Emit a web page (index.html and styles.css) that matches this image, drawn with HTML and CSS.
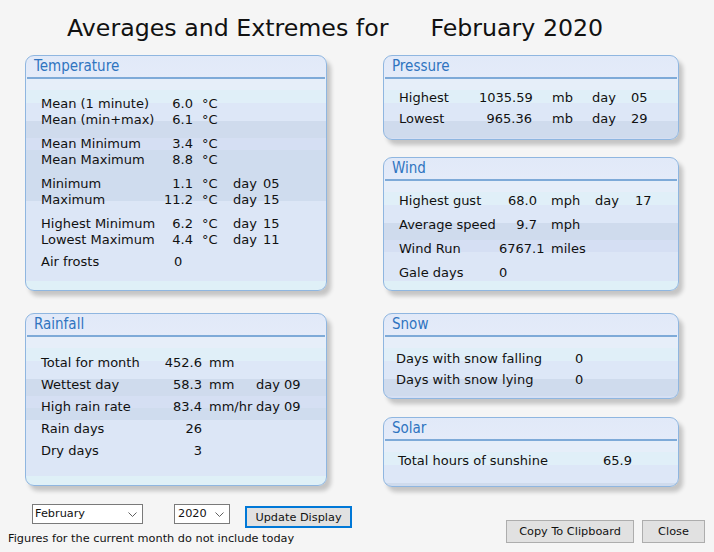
FILE: index.html
```html
<!DOCTYPE html>
<html>
<head>
<meta charset="utf-8">
<link rel="stylesheet" href="styles.css">
</head>
<body>
<div class="page">
  <h1 class="title"><span>Averages and Extremes for</span><span class="title-month">February 2020</span></h1>

  <div class="columns">
    <div class="col col-left">
      <section class="panel temp">
        <div class="panel-head">Temperature</div>
        <div class="panel-line"></div>
        <div class="panel-body">
          <div class="group">
            <div class="row"><span>Mean (1 minute)</span><span class="v">6.0</span><span class="u">°C</span></div>
            <div class="row"><span>Mean (min+max)</span><span class="v">6.1</span><span class="u">°C</span></div>
          </div>
          <div class="group">
            <div class="row"><span>Mean Minimum</span><span class="v">3.4</span><span class="u">°C</span></div>
            <div class="row"><span>Mean Maximum</span><span class="v">8.8</span><span class="u">°C</span></div>
          </div>
          <div class="group">
            <div class="row"><span>Minimum</span><span class="v">1.1</span><span class="u">°C</span><span>day</span><span>05</span></div>
            <div class="row"><span>Maximum</span><span class="v">11.2</span><span class="u">°C</span><span>day</span><span>15</span></div>
          </div>
          <div class="group">
            <div class="row"><span>Highest Minimum</span><span class="v">6.2</span><span class="u">°C</span><span>day</span><span>15</span></div>
            <div class="row"><span>Lowest Maximum</span><span class="v">4.4</span><span class="u">°C</span><span>day</span><span>11</span></div>
          </div>
          <div class="group group-last">
            <div class="row"><span>Air frosts</span><span class="v v-left">0</span></div>
          </div>
        </div>
      </section>

      <section class="panel rain">
        <div class="panel-head">Rainfall</div>
        <div class="panel-line"></div>
        <div class="panel-body">
          <div class="row"><span>Total for month</span><span class="v">452.6</span><span class="u">mm</span></div>
          <div class="row"><span>Wettest day</span><span class="v">58.3</span><span class="u">mm</span><span>day 09</span></div>
          <div class="row"><span>High rain rate</span><span class="v">83.4</span><span class="u">mm/hr</span><span>day 09</span></div>
          <div class="row"><span>Rain days</span><span class="v">26</span></div>
          <div class="row"><span>Dry days</span><span class="v">3</span></div>
        </div>
      </section>
    </div>

    <div class="col col-right">
      <section class="panel pressure">
        <div class="panel-head">Pressure</div>
        <div class="panel-line"></div>
        <div class="panel-body">
          <div class="row"><span>Highest</span><span class="v">1035.59</span><span class="u">mb</span><span>day</span><span>05</span></div>
          <div class="row"><span>Lowest</span><span class="v">965.36</span><span class="u">mb</span><span>day</span><span>29</span></div>
        </div>
      </section>

      <section class="panel wind">
        <div class="panel-head">Wind</div>
        <div class="panel-line"></div>
        <div class="panel-body">
          <div class="row"><span>Highest gust</span><span class="v">68.0</span><span class="u">mph</span><span>day</span><span>17</span></div>
          <div class="row"><span>Average speed</span><span class="v">9.7</span><span class="u">mph</span></div>
          <div class="row"><span>Wind Run</span><span class="v">6767.1</span><span class="u">miles</span></div>
          <div class="row"><span>Gale days</span><span class="v v-left">0</span></div>
        </div>
      </section>

      <section class="panel snow">
        <div class="panel-head">Snow</div>
        <div class="panel-line"></div>
        <div class="panel-body">
          <div class="row"><span>Days with snow falling</span><span>0</span></div>
          <div class="row"><span>Days with snow lying</span><span>0</span></div>
        </div>
      </section>

      <section class="panel solar">
        <div class="panel-head">Solar</div>
        <div class="panel-line"></div>
        <div class="panel-body">
          <div class="row"><span>Total hours of sunshine</span><span>65.9</span></div>
        </div>
      </section>
    </div>
  </div>

  <div class="footer">
    <div class="footer-left">
      <div class="controls">
        <div class="select select-month"><span>February</span><svg class="chev" width="9" height="5" viewBox="0 0 9 5"><path d="M0.5 0.5 L4.5 4.5 L8.5 0.5" fill="none" stroke="#606060" stroke-width="1"/></svg></div>
        <div class="select select-year"><span>2020</span><svg class="chev" width="9" height="5" viewBox="0 0 9 5"><path d="M0.5 0.5 L4.5 4.5 L8.5 0.5" fill="none" stroke="#606060" stroke-width="1"/></svg></div>
        <button class="btn btn-focus">Update Display</button>
      </div>
      <div class="note">Figures for the current month do not include today</div>
    </div>
    <div class="footer-right">
      <button class="btn btn-copy">Copy To Clipboard</button>
      <button class="btn btn-close">Close</button>
    </div>
  </div>
</div>
</body>
</html>
```

FILE: styles.css
```css
* { box-sizing: border-box; }

html, body {
  margin: 0;
  padding: 0;
  background: #f5f5f5;
}

body {
  width: 714px;
  height: 552px;
  overflow: hidden;
  font-family: "DejaVu Sans", Verdana, sans-serif;
  font-size: 13px;
  color: #111;
}

.title {
  margin: 0;
  height: 55px;
  padding: 4px 0 0 67px;
  line-height: 48px;
  font-size: 23.7px;
  font-weight: normal;
  color: #111;
  white-space: nowrap;
}

.title-month {
  margin-left: 42px;
}

.columns {
  display: flex;
  padding-left: 25px;
  gap: 56px;
  height: 435px;
}

.col {
  display: flex;
  flex-direction: column;
}

.col-left { width: 302px; }
.col-right { width: 296px; }

.panel {
  position: relative;
  border: 1px solid #8fb6e0;
  border-radius: 9px;
  box-shadow: 4px 5px 4px rgba(0, 0, 0, 0.2);
  background: linear-gradient(to bottom,
    #e1e9f8 0px, #e4ebf9 21px,
    #e6eef9 23px, #e6eef9 34px,
    #e0eff8 34px, #e0eff8 47px,
    #dde7f7 47px, #dde7f7 65px,
    #cfdbed 65px, #cfdbed 82px,
    #d5dff3 82px, #d5dff3 94px,
    #cfdcee 94px, #cfdcee 62%,
    #dce6f6 62%, #dce6f6 calc(100% - 9px),
    #dff0f7 calc(100% - 9px));
  overflow: hidden;
}

.panel-head {
  height: 21px;
  line-height: 21px;
  padding-left: 8px;
  font-family: "DejaVu Sans Condensed", "DejaVu Sans", sans-serif;
  font-size: 15px;
  color: #2f74c0;
}

.panel-line {
  height: 2px;
  margin: 0 1px;
  background: #7eaad8;
}

.row {
  display: grid;
  white-space: nowrap;
}

.v { text-align: right; }

/* Temperature */
.temp { height: 236px; }
.temp .panel-body { padding: 17px 0 0 15px; }
.temp .row {
  line-height: 16px;
  grid-template-columns: 120px 32px 40px 30px auto;
}
.temp .u { padding-left: 9px; }
.temp .group { margin-bottom: 8px; }
.temp .group:nth-child(4) { margin-bottom: 6px; }
.temp .v-left { text-align: left; padding-left: 13px; }

/* Rainfall */
.rain { height: 173px; margin-top: 22px; }
.rain .panel-body { padding: 15px 0 0 15px; }
.rain .row {
  line-height: 22px;
  grid-template-columns: 120px 41px 54px auto;
}
.rain .u { padding-left: 7px; }

/* Pressure */
.pressure { height: 85px; }
.pressure .panel-body { padding: 8px 0 0 15px; }
.pressure .row {
  line-height: 21px;
  grid-template-columns: 80px 53px 60px 39px auto;
}
.pressure .u { padding-left: 20px; }

/* Wind */
.wind { height: 134px; margin-top: 17px; }
.wind .panel-body { padding: 8px 0 0 15px; }
.wind .row {
  line-height: 24px;
  grid-template-columns: 100px 38px 58px 40px auto;
}
.wind .u { padding-left: 14px; }
.wind .v-left { text-align: left; }

/* Snow */
.snow { height: 86px; margin-top: 22px; }
.snow .panel-body { padding: 11px 0 0 12px; }
.snow .row {
  line-height: 21px;
  grid-template-columns: 179px auto;
}

/* Solar */
.solar { height: 70px; margin-top: 18px; }
.solar .panel-body { padding: 10px 0 0 14px; }
.solar .row {
  line-height: 20px;
  grid-template-columns: 205px auto;
}

/* Footer */
.footer {
  display: flex;
  justify-content: space-between;
  align-items: flex-start;
  padding: 14px 9px 0 8px;
  font-size: 11.3px;
}

.controls {
  display: flex;
  align-items: flex-start;
  margin-left: 24px;
}

.select {
  position: relative;
  height: 20px;
  border: 1px solid #7a7a7a;
  background: #fff;
  line-height: 18px;
  padding-left: 2px;
  color: #111;
}

.select-month { width: 111px; }
.select-year { width: 56px; margin-left: 31px; padding-left: 3px; }

.chev {
  position: absolute;
  right: 5px;
  top: 7px;
}

.btn {
  font-family: "DejaVu Sans", Verdana, sans-serif;
  font-size: 11.3px;
  color: #111;
  background: #e1e1e1;
  border: 1px solid #adadad;
  padding: 0;
  margin: 0;
}

.btn-focus {
  width: 107px;
  height: 22px;
  margin-left: 15px;
  margin-top: 2px;
  border: 2px solid #0078d7;
}

.note {
  margin-top: 4px;
  line-height: 14px;
  color: #111;
}

.footer-right {
  display: flex;
  gap: 8px;
  margin-top: 16px;
}

.btn-copy { width: 128px; height: 23px; }
.btn-close { width: 63px; height: 23px; }
```
